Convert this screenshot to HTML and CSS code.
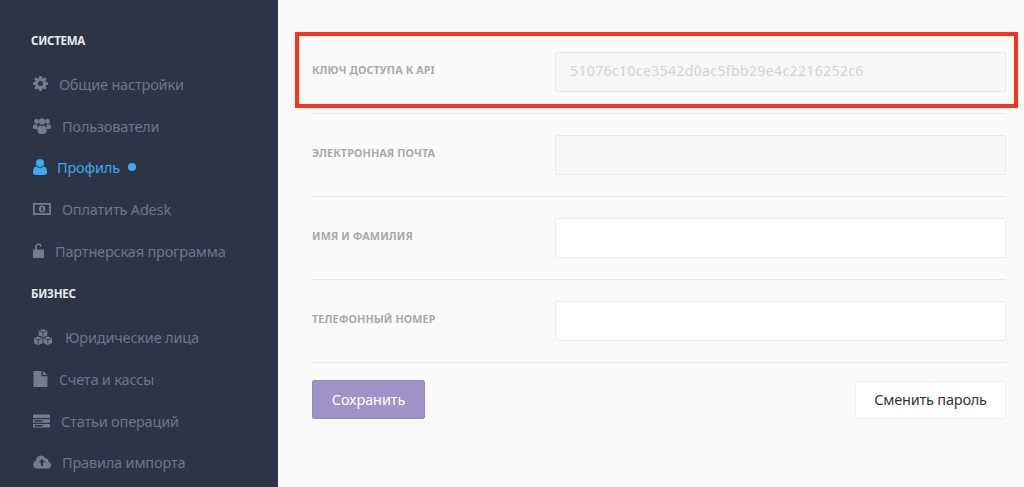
FILE: index.html
```html
<!DOCTYPE html>
<html lang="ru">
<head>
<meta charset="utf-8">
<title>Профиль</title>
<link rel="stylesheet" href="styles.css">
</head>
<body>
<div class="app">
  <aside class="sidebar">
    <h3 class="section">СИСТЕМА</h3>
    <ul class="menu">
      <li class="item"><svg class="icon gear" viewBox="0 0 16 16"><path d="M6.700 0h2.600l.4 2.200 1.300.5L12.800 1.400l1.800 1.800-1.300 1.800.5 1.300 2.200.4v2.600l-2.200.4-.5 1.300 1.300 1.800-1.800 1.800-1.800-1.300-1.300.5-.4 2.200H6.700l-.4-2.200-1.300-.5-1.800 1.300-1.800-1.800 1.300-1.800-.5-1.300L0 9.300V6.700l2.200-.4.5-1.300-1.300-1.800 1.800-1.800L5 2.700l1.300-.5zM8 5.300a2.700 2.700 0 1 0 0 5.400 2.700 2.700 0 0 0 0-5.400z" fill-rule="evenodd"/></svg><span class="t1">Общие настройки</span></li>
      <li class="item"><svg class="icon users" viewBox="0 0 18 16"><circle cx="3.500" cy="3.400" r="2.400"/><circle cx="14.500" cy="3.400" r="2.400"/><circle cx="9" cy="3.400" r="3.100"/><path d="M0 10.500V8c0-1 .8-1.600 1.800-1.600h2.400a4 4 0 0 0 .8 3.500 4 4 0 0 0-1 1.600zM18 10.500V8c0-1-.8-1.600-1.800-1.600h-2.400a4 4 0 0 1-.8 3.500 4 4 0 0 1 1 1.600zM4.500 12.500c0-3 1.200-5 2.500-5 .6.500 1.200.8 2 .8s1.400-.3 2-.8c1.300 0 2.500 2 2.500 5 0 2.200-1 3.500-2.500 3.500H7c-1.500 0-2.500-1.300-2.500-3.500z"/></svg><span class="t2">Пользователи</span></li>
      <li class="item active"><svg class="icon person" viewBox="0 0 14 16"><circle cx="7" cy="4" r="4"/><path d="M0 13c0-3 1-5.500 3.500-5.500C4.500 8.300 5.700 8.800 7 8.800s2.500-.5 3.500-1.300C13 7.500 14 10 14 13c0 1.800-1 3-2.700 3H2.700C1 16 0 14.800 0 13z"/></svg><span class="t3">Профиль</span><span class="dot"></span></li>
      <li class="item"><svg class="icon money" viewBox="0 0 18 12"><path fill-rule="evenodd" d="M0 0h18v12H0zM1.800 1.800v8.400h14.400V1.800zM9 2.500c1.900 0 3.400 1.600 3.400 3.500S10.900 9.500 9 9.500 5.600 7.900 5.600 6 7.100 2.500 9 2.500zM8.200 4v4h1.600V4z"/></svg><span class="t2">Оплатить Adesk</span></li>
      <li class="item"><svg class="icon lock" viewBox="0 0 11 15"><path d="M2.200 6.500V4a3.300 3.300 0 0 1 6.600-.5H7.200A1.700 1.700 0 0 0 3.800 4v2.500H10c.6 0 1 .4 1 1V14c0 .6-.4 1-1 1H1c-.6 0-1-.4-1-1V7.500c0-.6.400-1 1-1z"/></svg><span class="t4">Партнерская программа</span></li>
    </ul>
    <h3 class="section">БИЗНЕС</h3>
    <ul class="menu">
      <li class="item"><svg class="icon cubes" viewBox="0 0 20 16"><path d="M10 0l4.300 1.700v4.700L10 8.100 5.700 6.400V1.700z"/><path d="M5.200 7.400l4.300 1.700v4.900l-4.300 2-4.200-2V9.100z"/><path d="M14.800 7.400l4.200 1.700v4.900l-4.200 2-4.300-2V9.100z"/><path class="cube-line" d="M6.500 2l3.500 1.400L13.500 2M10 3.400v3.800M2 9.500l3.200 1.300 3.300-1.300M5.200 10.800v3.800M11.500 9.500l3.300 1.300L18 9.500M14.800 10.800v3.800"/></svg><span class="t5">Юридические лица</span></li>
      <li class="item"><svg class="icon doc" viewBox="0 0 14 16"><path d="M0 .500C0 .200.200 0 .500 0H8v4.500c0 .500.300.8.800.8H14v10.200c0 .300-.2.500-.5.500H.500c-.3 0-.5-.2-.5-.5zM9.500 0L14 4h-4.500z"/></svg><span class="t1 t1b">Счета и кассы</span></li>
      <li class="item"><svg class="icon server" viewBox="0 0 17 14"><path fill-rule="evenodd" d="M0 .500h17v3.600H0zM0 5.200h17v3.600H0zM0 9.900h17v3.600H0zM1.500 6.300v1.400h8V6.300zM1.500 11v1.400h8V11z"/></svg><span class="t6">Статьи операций</span></li>
      <li class="item"><svg class="icon cloud" viewBox="0 0 18 14"><path fill-rule="evenodd" d="M4 13.500a4 4 0 0 1-1-7.800A5 5 0 0 1 8 .500c2 0 3.500 1 4.400 2.800A3.500 3.500 0 0 1 15.500 7 3.300 3.300 0 0 1 14.500 13.500zM9 4L5.500 7.500H8V11h2V7.500h2.500z"/></svg><span class="t2">Правила импорта</span></li>
    </ul>
  </aside>
  <main class="content">
    <form class="form">
      <div class="row">
        <label class="label">КЛЮЧ ДОСТУПА К API</label>
        <div class="field disabled key">51076c10ce3542d0ac5fbb29e4c2216252c6</div>
      </div>
      <div class="row">
        <label class="label">ЭЛЕКТРОННАЯ ПОЧТА</label>
        <div class="field disabled"></div>
      </div>
      <div class="row">
        <label class="label">ИМЯ И ФАМИЛИЯ</label>
        <div class="field"></div>
      </div>
      <div class="row">
        <label class="label">ТЕЛЕФОННЫЙ НОМЕР</label>
        <div class="field"></div>
      </div>
      <div class="actions">
        <button type="button" class="btn primary">Сохранить</button>
        <button type="button" class="btn plain">Сменить пароль</button>
      </div>
    </form>
    <div class="highlight"></div>
  </main>
</div>
</body>
</html>
```

FILE: styles.css
```css
* { box-sizing: border-box; }
html, body { margin: 0; height: 100%; overflow: hidden; }
body { font-family: "Noto Sans", "Open Sans", sans-serif; background: #fafafa; }
.app { display: flex; height: 487px; }
.sidebar {
  width: 278px;
  flex: none;
  background: #2d3446;
  padding: 32px 0 0 31px;
  border-right: 1px solid #343b4d;
}
.section {
  margin: 0;
  height: 18px;
  line-height: 18px;
  font-size: 11.500px;
  font-weight: 700;
  color: #e6e8ec;
  letter-spacing: -0.25px;
}
.menu { list-style: none; margin: 13px 0 14px; padding: 0 0 0 2px; }
.menu:last-child { margin-bottom: 0; }
.item {
  display: flex;
  align-items: center;
  height: 41.700px;
  font-size: 14.500px;
  color: #6f7686;
  letter-spacing: -0.180px;
  white-space: nowrap;
}
.icon { fill: #737b8c; flex: none; }
.gear { width: 15px; height: 15px; }
.users { width: 18px; height: 16px; }
.person { width: 14px; height: 16px; }
.money { width: 18px; height: 12px; }
.lock { width: 11px; height: 15px; }
.cubes { width: 20px; height: 16px; }
.doc { width: 15px; height: 16px; }
.server { width: 17px; height: 14px; }
.cloud { width: 18px; height: 14px; }
.cube-line { fill: none; stroke: #2d3446; stroke-width: 0.9; }
.t1 { margin-left: 11px; }
.t1b { margin-left: 11px; }
.t2 { margin-left: 11px; }
.t3 { margin-left: 10px; }
.t4 { margin-left: 11px; }
.t5 { margin-left: 12px; }
.t6 { margin-left: 11px; }
.active { color: #3ea9ee; }
.active .icon { fill: #3ea9ee; }
.dot { width: 8px; height: 8px; border-radius: 50%; background: #3ea9ee; margin-left: 8px; }

.content { position: relative; flex: 1; padding: 31px 18px 0 34px; }
.row {
  display: flex;
  align-items: center;
  height: 83px;
  border-bottom: 1px solid #e8e8e8;
}
.label {
  width: 243px;
  flex: none;
  font-size: 10.800px;
  font-weight: 700;
  color: #a9a9a9;
  letter-spacing: 0.100px;
  position: relative;
  top: -3px;
}
.field {
  flex: 1;
  height: 40px;
  background: #fff;
  border: 1px solid #ececec;
  border-radius: 2px;
}
.field.disabled { background: #f7f7f7; border-color: #e9e9e9; }
.key {
  padding-left: 14px;
  line-height: 35px;
  font-size: 14px;
  color: #d3d3d3;
  letter-spacing: 0.380px;
  white-space: nowrap;
}
.actions { display: flex; justify-content: space-between; align-items: center; padding-top: 17px; }
.btn { font-family: inherit; font-size: 14.500px; border-radius: 2px; padding: 0 0 2px; }
.primary {
  width: 113px;
  height: 39px;
  background: #9f92c6;
  border: 1px solid #9689c0;
  color: #fff;
  letter-spacing: -0.100px;
}
.plain {
  width: 151px;
  height: 38px;
  background: #fff;
  border: 1px solid #f0f0f0;
  color: #333;
  letter-spacing: -0.200px;
}
.highlight {
  position: absolute;
  left: 17px;
  top: 32px;
  width: 723px;
  height: 76px;
  border: 4px solid #ff3218;
}
```
